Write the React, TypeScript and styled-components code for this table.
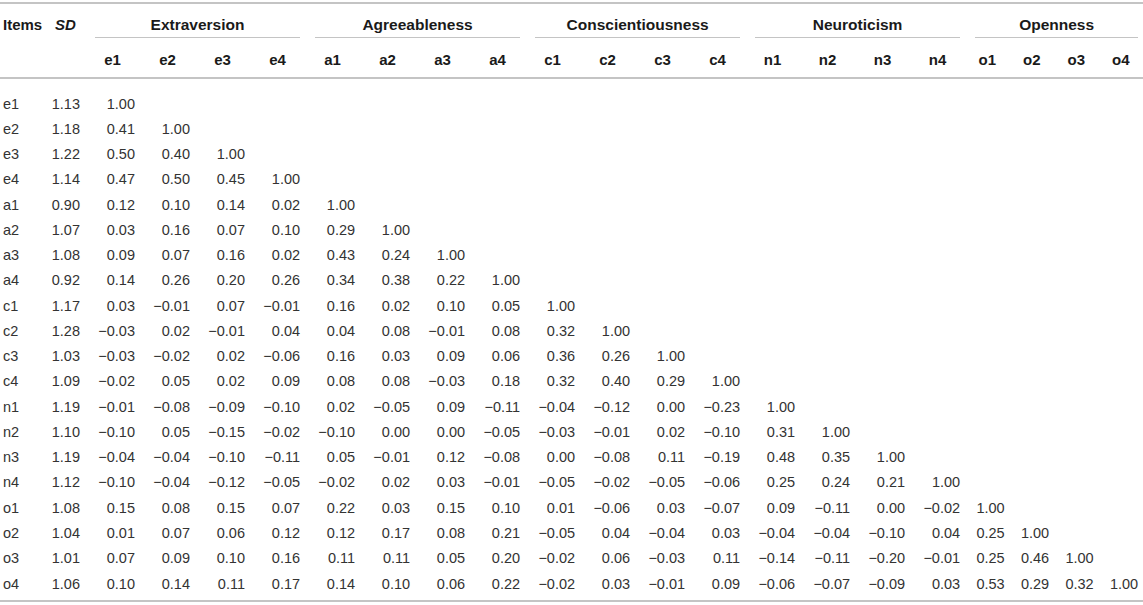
import React from "react";
import styled, { createGlobalStyle } from "styled-components";

const groups = [
  { name: "Extraversion", key: "e" },
  { name: "Agreeableness", key: "a" },
  { name: "Conscientiousness", key: "c" },
  { name: "Neuroticism", key: "n" },
  { name: "Openness", key: "o" },
];

const items = groups.flatMap((g) => [1, 2, 3, 4].map((i) => g.key + i));

// SD followed by the lower triangle of the correlation matrix
const rows: string[][] = [
  ["1.13", "1.00"],
  ["1.18", "0.41", "1.00"],
  ["1.22", "0.50", "0.40", "1.00"],
  ["1.14", "0.47", "0.50", "0.45", "1.00"],
  ["0.90", "0.12", "0.10", "0.14", "0.02", "1.00"],
  ["1.07", "0.03", "0.16", "0.07", "0.10", "0.29", "1.00"],
  ["1.08", "0.09", "0.07", "0.16", "0.02", "0.43", "0.24", "1.00"],
  ["0.92", "0.14", "0.26", "0.20", "0.26", "0.34", "0.38", "0.22", "1.00"],
  ["1.17", "0.03", "−0.01", "0.07", "−0.01", "0.16", "0.02", "0.10", "0.05", "1.00"],
  ["1.28", "−0.03", "0.02", "−0.01", "0.04", "0.04", "0.08", "−0.01", "0.08", "0.32", "1.00"],
  ["1.03", "−0.03", "−0.02", "0.02", "−0.06", "0.16", "0.03", "0.09", "0.06", "0.36", "0.26", "1.00"],
  ["1.09", "−0.02", "0.05", "0.02", "0.09", "0.08", "0.08", "−0.03", "0.18", "0.32", "0.40", "0.29", "1.00"],
  ["1.19", "−0.01", "−0.08", "−0.09", "−0.10", "0.02", "−0.05", "0.09", "−0.11", "−0.04", "−0.12", "0.00", "−0.23", "1.00"],
  ["1.10", "−0.10", "0.05", "−0.15", "−0.02", "−0.10", "0.00", "0.00", "−0.05", "−0.03", "−0.01", "0.02", "−0.10", "0.31", "1.00"],
  ["1.19", "−0.04", "−0.04", "−0.10", "−0.11", "0.05", "−0.01", "0.12", "−0.08", "0.00", "−0.08", "0.11", "−0.19", "0.48", "0.35", "1.00"],
  ["1.12", "−0.10", "−0.04", "−0.12", "−0.05", "−0.02", "0.02", "0.03", "−0.01", "−0.05", "−0.02", "−0.05", "−0.06", "0.25", "0.24", "0.21", "1.00"],
  ["1.08", "0.15", "0.08", "0.15", "0.07", "0.22", "0.03", "0.15", "0.10", "0.01", "−0.06", "0.03", "−0.07", "0.09", "−0.11", "0.00", "−0.02", "1.00"],
  ["1.04", "0.01", "0.07", "0.06", "0.12", "0.12", "0.17", "0.08", "0.21", "−0.05", "0.04", "−0.04", "0.03", "−0.04", "−0.04", "−0.10", "0.04", "0.25", "1.00"],
  ["1.01", "0.07", "0.09", "0.10", "0.16", "0.11", "0.11", "0.05", "0.20", "−0.02", "0.06", "−0.03", "0.11", "−0.14", "−0.11", "−0.20", "−0.01", "0.25", "0.46", "1.00"],
  ["1.06", "0.10", "0.14", "0.11", "0.17", "0.14", "0.10", "0.06", "0.22", "−0.02", "0.03", "−0.01", "0.09", "−0.06", "−0.07", "−0.09", "0.03", "0.53", "0.29", "0.32", "1.00"],
];

function App() {
  return (
    <Page>
      <GlobalStyle />
      <Table>
        <colgroup>
          <col style={{ width: 45 }} />
          <col style={{ width: 40 }} />
          {items.map((it) => (
            <col key={it} style={{ width: it[0] === "o" ? 44.5 : 55 }} />
          ))}
        </colgroup>
        <thead>
          <tr>
            <TopTh>Items</TopTh>
            <TopTh $sd>SD</TopTh>
            {groups.map((g) => (
              <GroupTh key={g.key} colSpan={4}>
                <GroupLabel>{g.name}</GroupLabel>
              </GroupTh>
            ))}
          </tr>
          <tr>
            <SubTh />
            <SubTh />
            {items.map((it) => (
              <SubTh key={it}>{it}</SubTh>
            ))}
          </tr>
        </thead>
        <tbody>
          {rows.map((r, i) => (
            <BodyRow key={items[i]}>
              <LabelCell>{items[i]}</LabelCell>
              {items.concat("sd").map((_, j) => (
                <NumCell key={j}>{r[j] ?? ""}</NumCell>
              ))}
            </BodyRow>
          ))}
        </tbody>
      </Table>
    </Page>
  );
}

const GlobalStyle = createGlobalStyle`
  body {
    margin: 0;
    background: #ffffff;
    font-family: "Liberation Sans", Arial, sans-serif;
  }
`;

const Page = styled.div`
  padding-top: 2px;
  width: 1143px;
`;

const Table = styled.table`
  width: 1143px;
  table-layout: fixed;
  border-collapse: separate;
  border-spacing: 0;
  font-size: 14.5px;
  color: #333333;
`;

const TopTh = styled.th<{ $sd?: boolean }>`
  border-top: 2px solid #c4c4c4;
  padding: 11.5px 0 5.5px ${(p) => (p.$sd ? "10px" : "3px")};
  text-align: left;
  line-height: 17px;
  font-size: 15px;
  font-weight: 700;
  font-style: ${(p) => (p.$sd ? "italic" : "normal")};
  color: #1a1a1a;
  vertical-align: top;
  white-space: nowrap;
`;

const GroupTh = styled.th`
  border-top: 2px solid #c4c4c4;
  padding: 11.5px 0 0;
  vertical-align: top;
`;

const GroupLabel = styled.div`
  margin: 0 5px 0 10px;
  padding-bottom: 4.5px;
  border-bottom: 1px solid #c4c4c4;
  line-height: 17px;
  font-size: 15.5px;
  font-weight: 700;
  color: #1a1a1a;
  text-align: center;
  white-space: nowrap;
`;

const SubTh = styled.th`
  border-bottom: 2px solid #c4c4c4;
  padding: 12.5px 0 9.5px;
  line-height: 17px;
  font-size: 15px;
  font-weight: 700;
  color: #1a1a1a;
  text-align: center;
`;

const BodyRow = styled.tr`
  &:first-child td {
    padding-top: 12.5px;
  }
  &:last-child td {
    padding-bottom: 3.5px;
    border-bottom: 2px solid #c4c4c4;
  }
`;

const LabelCell = styled.td`
  padding: 0 0 0 3px;
  line-height: 25.26px;
  text-align: left;
  white-space: nowrap;
`;

const NumCell = styled.td`
  padding: 0 5px 0 0;
  line-height: 25.26px;
  text-align: right;
  white-space: nowrap;
`;

export default App;
